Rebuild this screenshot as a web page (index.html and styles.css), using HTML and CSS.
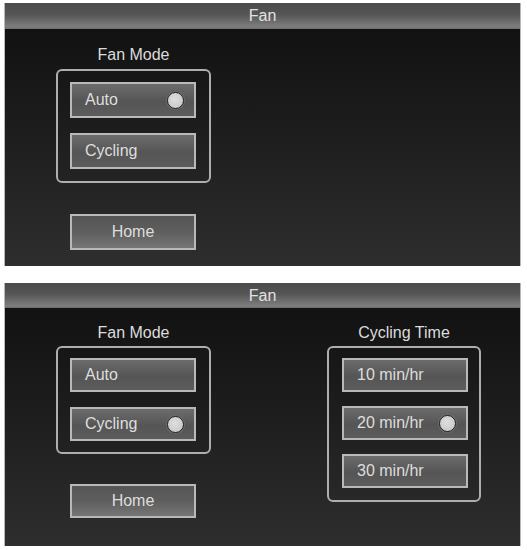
FILE: index.html
```html
<!DOCTYPE html>
<html>
<head>
<meta charset="utf-8">
<link rel="stylesheet" href="styles.css">
</head>
<body>
<div class="page">
  <section class="panel">
    <div class="title">Fan</div>
    <div class="content">
      <div class="column col-left">
        <div class="label">Fan Mode</div>
        <div class="group">
          <div class="btn"><span>Auto</span><span class="radio"></span></div>
          <div class="btn"><span>Cycling</span></div>
        </div>
        <div class="btn home">Home</div>
      </div>
    </div>
  </section>
  <section class="panel panel-compact">
    <div class="title">Fan</div>
    <div class="content">
      <div class="column col-left">
        <div class="label">Fan Mode</div>
        <div class="group">
          <div class="btn"><span>Auto</span></div>
          <div class="btn"><span>Cycling</span><span class="radio"></span></div>
        </div>
        <div class="btn home">Home</div>
      </div>
      <div class="column col-right">
        <div class="label">Cycling Time</div>
        <div class="group group-right">
          <div class="btn"><span>10 min/hr</span></div>
          <div class="btn"><span>20 min/hr</span><span class="radio"></span></div>
          <div class="btn"><span>30 min/hr</span></div>
        </div>
      </div>
    </div>
  </section>
</div>
</body>
</html>
```

FILE: styles.css
```css
* { box-sizing: border-box; }
html, body { margin: 0; padding: 0; background: #ffffff; }
body {
  font-family: "Liberation Sans", Arial, sans-serif;
  color: #d9d9d9;
}
.page {
  padding: 3px 0 0 4px;
  display: flex;
  flex-direction: column;
  gap: 17px;
}
.panel {
  width: 517px;
  height: 263px;
  border-left: 1px solid #b8b8b8;
  border-right: 1px solid #b8b8b8;
  background: linear-gradient(#0f0f0f, #1c1c1c 45%, #2e2e2e);
  display: flex;
  flex-direction: column;
}
.title {
  height: 26px;
  line-height: 26px;
  text-align: center;
  font-size: 16px;
  color: #e2e2e2;
  background: linear-gradient(#4a4a4a, #565656 45%, #7e7e7e 92%, #6a6a6a);
}
.content {
  display: flex;
  padding-left: 51px;
}
.column {
  display: flex;
  flex-direction: column;
  width: 155px;
}
.col-right {
  margin-left: 116px;
  width: 154px;
}
.label {
  margin-top: 16px;
  height: 20px;
  line-height: 20px;
  margin-bottom: 4px;
  text-align: center;
  font-size: 16px;
  color: #dcdcdc;
}
.group {
  border: 2px solid #aeaeae;
  border-radius: 6px;
  padding: 11px 13px 12px 12px;
  display: flex;
  flex-direction: column;
  gap: 15px;
}
.btn {
  height: 36px;
  border: 2px solid #b9b9b9;
  background: linear-gradient(#6c6c6c, #555555 55%, #5c5c5c);
  display: flex;
  align-items: center;
  justify-content: space-between;
  padding: 0 10px 0 13px;
  font-size: 16px;
  color: #dedede;
}
.radio {
  width: 17px;
  height: 17px;
  border-radius: 50%;
  background: radial-gradient(circle at 45% 40%, #dedede, #c4c4c4);
  border: 1px solid #2a2a2a;
  box-shadow: 0 0 0 1px #6a6a6a;
}
.home {
  margin-top: 31px;
  margin-left: 14px;
  width: 126px;
  justify-content: center;
  padding: 0;
  background: linear-gradient(#555555, #5e5e5e 50%, #767676);
}

/* second screen: slightly more compact proportions */
.panel-compact .title {
  height: 25px;
  line-height: 25px;
}
.panel-compact .label {
  margin-top: 15px;
  margin-bottom: 3px;
}
.panel-compact .group {
  padding: 10px 13px 11px 12px;
}
.panel-compact .btn {
  height: 34px;
}
.panel-compact .home {
  margin-top: 30px;
}
.panel-compact .group-right {
  padding: 10px 11px 12px 13px;
  gap: 14px;
}
.panel-compact .group-right .btn:first-child + .btn {
  margin-bottom: 0;
}
```
